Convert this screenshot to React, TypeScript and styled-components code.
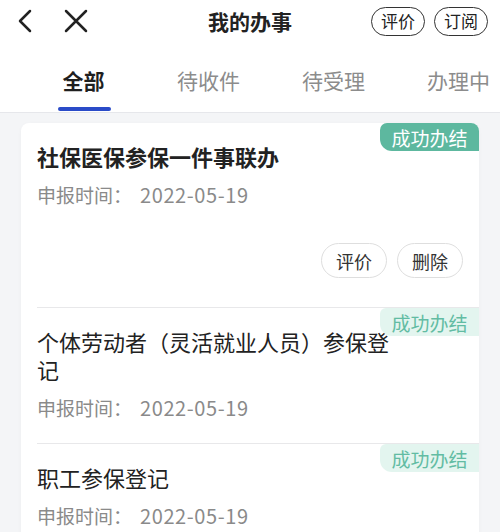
import React from 'react';
import styled, { createGlobalStyle } from 'styled-components';

const GlobalStyle = createGlobalStyle`
  * {
    box-sizing: border-box;
    margin: 0;
    padding: 0;
  }

  body {
    font-family: 'Noto Sans CJK SC', 'Noto Sans', sans-serif;
    -webkit-font-smoothing: antialiased;
    background-color: #f4f5f7;
    color: #222;
    width: 500px;
    height: 532px;
    overflow: hidden;
  }
`;

const Page = styled.div`
  display: flex;
  flex-direction: column;
  height: 532px;
  overflow: hidden;
`;

const TopArea = styled.div`
  background: #fff;
  border-bottom: 1px solid #e6e7eb;
`;

const NavBar = styled.div`
  display: flex;
  align-items: center;
  gap: 31px;
  height: 42px;
  padding: 0 12px 0 17px;
  position: relative;
`;

const NavIcon = styled.button`
  display: flex;
  align-items: center;
  background: none;
  border: none;
  color: #222;
`;

const NavTitle = styled.h1`
  position: absolute;
  left: 0;
  right: 0;
  text-align: center;
  font-size: 21px;
  font-weight: 700;
  line-height: 42px;
  pointer-events: none;
`;

const NavActions = styled.div`
  margin-left: auto;
  display: flex;
  gap: 9px;
`;

const OutlineButton = styled.button`
  height: 29px;
  padding: 0 9px;
  border: 1.5px solid #333;
  border-radius: 15px;
  background: #fff;
  font-family: inherit;
  font-size: 17px;
  line-height: 26px;
  color: #222;
`;

const Tabs = styled.div`
  display: flex;
  padding-left: 21px;
  height: 70px;
  overflow: hidden;
`;

const Tab = styled.div<{ $active?: boolean }>`
  flex: 0 0 125px;
  position: relative;
  display: flex;
  align-items: center;
  justify-content: center;
  padding-top: 6px;
  font-size: 21px;
  font-weight: ${(p) => (p.$active ? 700 : 400)};
  color: ${(p) => (p.$active ? '#1f1f1f' : '#8c8c8c')};
  white-space: nowrap;

  &::after {
    content: '';
    display: ${(p) => (p.$active ? 'block' : 'none')};
    position: absolute;
    bottom: 1px;
    left: 50%;
    width: 53px;
    height: 4px;
    margin-left: -26px;
    border-radius: 2px;
    background: #2a4bc8;
  }
`;

const Content = styled.div`
  flex: 1;
  padding: 10px 21px 0;
`;

const Card = styled.div`
  background: #fff;
  border-radius: 8px;
  box-shadow: 0 1px 4px rgba(0, 0, 0, 0.03);
  overflow: hidden;
`;

const Item = styled.div`
  position: relative;
  margin-left: 16px;
  padding: 19px 0 23px;

  & + & {
    border-top: 1px solid #e8e8ea;
  }
`;

const Badge = styled.span<{ $solid?: boolean }>`
  position: absolute;
  top: 0;
  right: 0;
  width: 99px;
  height: 28px;
  display: flex;
  align-items: center;
  justify-content: center;
  font-size: 19px;
  color: ${(p) => (p.$solid ? '#fff' : '#62bca3')};
  background: ${(p) => (p.$solid ? '#5db89f' : '#e3f5ef')};
  border-radius: ${(p) => (p.$solid ? '7px 0 0 12px' : '6px 0 0 12px')};
`;

const ItemTitle = styled.h2<{ $bold?: boolean }>`
  padding-right: 80px;
  font-size: 22px;
  line-height: 28px;
  font-weight: ${(p) => (p.$bold ? 700 : 400)};
  color: #222;
`;

const ItemDate = styled.p`
  margin-top: 13px;
  font-size: 19px;
  line-height: 24px;
  color: #8a8a8a;

  span {
    margin-left: 8px;
    font-size: 20px;
    letter-spacing: 0.6px;
  }
`;

const ItemActions = styled.div`
  display: flex;
  justify-content: flex-end;
  gap: 10px;
  margin-top: 36px;
  margin-bottom: 6px;
  padding-right: 16px;
`;

const PillButton = styled.button`
  width: 66px;
  height: 35px;
  border: 1px solid #dedede;
  border-radius: 18px;
  background: #fff;
  font-family: inherit;
  font-size: 18px;
  color: #333;
`;

type Record = {
  title: string;
  date: string;
  bold?: boolean;
  solid?: boolean;
  actions?: string[];
};

const records: Record[] = [
  { title: '社保医保参保一件事联办', date: '2022-05-19', bold: true, solid: true, actions: ['评价', '删除'] },
  { title: '个体劳动者（灵活就业人员）参保登记', date: '2022-05-19' },
  { title: '职工参保登记', date: '2022-05-19' },
];

const tabs = ['全部', '待收件', '待受理', '办理中'];

const App: React.FC = () => {
  return (
    <>
      <GlobalStyle />
      <Page>
        <TopArea>
          <NavBar>
            <NavIcon aria-label="返回">
              <svg width="16" height="24" viewBox="0 0 16 24" fill="none">
                <path d="M13 2 L3 12 L13 22" stroke="currentColor" strokeWidth="2.5" strokeLinecap="round" strokeLinejoin="round" />
              </svg>
            </NavIcon>
            <NavIcon aria-label="关闭">
              <svg width="24" height="24" viewBox="0 0 24 24" fill="none">
                <path d="M2 2 L22 22 M22 2 L2 22" stroke="currentColor" strokeWidth="2.5" strokeLinecap="round" />
              </svg>
            </NavIcon>
            <NavTitle>我的办事</NavTitle>
            <NavActions>
              <OutlineButton>评价</OutlineButton>
              <OutlineButton>订阅</OutlineButton>
            </NavActions>
          </NavBar>
          <Tabs>
            {tabs.map((t, i) => (
              <Tab key={t} $active={i === 0}>
                {t}
              </Tab>
            ))}
          </Tabs>
        </TopArea>
        <Content>
          <Card>
            {records.map((r) => (
              <Item key={r.title}>
                <Badge $solid={r.solid}>成功办结</Badge>
                <ItemTitle $bold={r.bold}>{r.title}</ItemTitle>
                <ItemDate>
                  申报时间：<span>{r.date}</span>
                </ItemDate>
                {r.actions && (
                  <ItemActions>
                    {r.actions.map((a) => (
                      <PillButton key={a}>{a}</PillButton>
                    ))}
                  </ItemActions>
                )}
              </Item>
            ))}
          </Card>
        </Content>
      </Page>
    </>
  );
};

export default App;
